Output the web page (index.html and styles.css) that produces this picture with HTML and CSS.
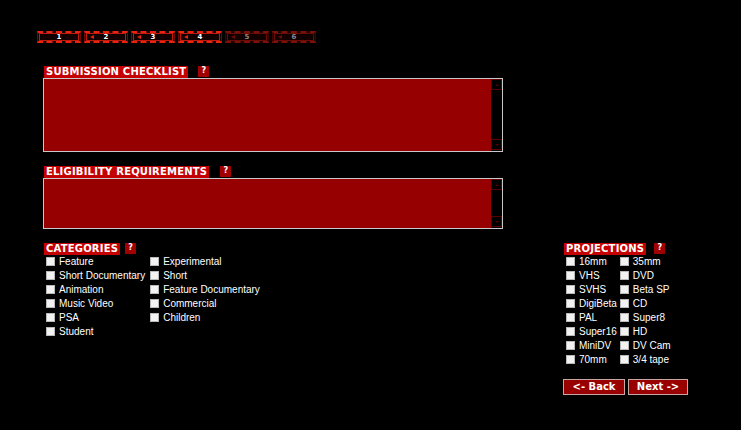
FILE: index.html
```html
<!DOCTYPE html>
<html>
<head>
<meta charset="utf-8">
<link rel="stylesheet" href="styles.css">
</head>
<body>
<div class="page">
  <div class="tabs">
    <div class="tab"><span class="tab-in">1</span></div>
    <div class="tab"><span class="tab-in"><i class="arr"></i>2</span></div>
    <div class="tab"><span class="tab-in"><i class="arr"></i>3</span></div>
    <div class="tab"><span class="tab-in"><i class="arr"></i>4</span></div>
    <div class="tab tab-off"><span class="tab-in"><i class="arr"></i>5</span></div>
    <div class="tab tab-off"><span class="tab-in"><i class="arr"></i>6</span></div>
  </div>

  <div class="main">
    <div class="section">
      <div class="head"><span class="label">SUBMISSION CHECKLIST</span><span class="help g10">?</span></div>
      <div class="ta ta-tall"><div class="ta-body"></div><div class="sb"><span class="sb-btn"><i class="up"></i></span><span class="sb-btn"><i class="down"></i></span></div></div>
    </div>

    <div class="section s2">
      <div class="head"><span class="label">ELIGIBILITY REQUIREMENTS</span><span class="help g11">?</span></div>
      <div class="ta ta-short"><div class="ta-body"></div><div class="sb"><span class="sb-btn"><i class="up"></i></span><span class="sb-btn"><i class="down"></i></span></div></div>
    </div>

    <div class="bottom">
      <div class="cats">
        <div class="head"><span class="label">CATEGORIES</span><span class="help g5">?</span></div>
        <div class="grid cat-grid">
          <label class="opt"><input type="checkbox"><span>Feature</span></label>
          <label class="opt"><input type="checkbox"><span>Experimental</span></label>
          <label class="opt"><input type="checkbox"><span>Short Documentary</span></label>
          <label class="opt"><input type="checkbox"><span>Short</span></label>
          <label class="opt"><input type="checkbox"><span>Animation</span></label>
          <label class="opt"><input type="checkbox"><span>Feature Documentary</span></label>
          <label class="opt"><input type="checkbox"><span>Music Video</span></label>
          <label class="opt"><input type="checkbox"><span>Commercial</span></label>
          <label class="opt"><input type="checkbox"><span>PSA</span></label>
          <label class="opt"><input type="checkbox"><span>Children</span></label>
          <label class="opt"><input type="checkbox"><span>Student</span></label>
        </div>
      </div>
      <div class="proj">
        <div class="head"><span class="label">PROJECTIONS</span><span class="help g8">?</span></div>
        <div class="grid proj-grid">
          <label class="opt"><input type="checkbox"><span>16mm</span></label>
          <label class="opt"><input type="checkbox"><span>35mm</span></label>
          <label class="opt"><input type="checkbox"><span>VHS</span></label>
          <label class="opt"><input type="checkbox"><span>DVD</span></label>
          <label class="opt"><input type="checkbox"><span>SVHS</span></label>
          <label class="opt"><input type="checkbox"><span>Beta SP</span></label>
          <label class="opt"><input type="checkbox"><span>DigiBeta</span></label>
          <label class="opt"><input type="checkbox"><span>CD</span></label>
          <label class="opt"><input type="checkbox"><span>PAL</span></label>
          <label class="opt"><input type="checkbox"><span>Super8</span></label>
          <label class="opt"><input type="checkbox"><span>Super16</span></label>
          <label class="opt"><input type="checkbox"><span>HD</span></label>
          <label class="opt"><input type="checkbox"><span>MiniDV</span></label>
          <label class="opt"><input type="checkbox"><span>DV Cam</span></label>
          <label class="opt"><input type="checkbox"><span>70mm</span></label>
          <label class="opt"><input type="checkbox"><span>3/4 tape</span></label>
        </div>
        <div class="buttons">
          <button class="btn btn-back">&lt;- Back</button>
          <button class="btn btn-next">Next -&gt;</button>
        </div>
      </div>
    </div>
  </div>
</div>
</body>
</html>
```

FILE: styles.css
```css
html, body {
  margin: 0;
  background: #000;
}
body {
  font-family: "Liberation Sans", Arial, sans-serif;
  color: #fff;
}
.page {
  padding: 31px 0 0 37px;
}

/* step tabs */
.tabs {
  display: flex;
  gap: 3px;
}
.tab {
  box-sizing: border-box;
  width: 44px;
  height: 12px;
  border-top: 2px dashed #e8230f;
  border-bottom: 2px dashed #e8230f;
  border-left: 1px solid #6a0a00;
  border-right: 1px solid #6a0a00;
  padding: 0 1px;
  background: #1a0200;
}
.tab-in {
  box-sizing: border-box;
  position: relative;
  display: flex;
  align-items: center;
  justify-content: center;
  height: 8px;
  border: 1px solid #c0180a;
  background: #120000;
  font: bold 7px "DejaVu Sans", Verdana, sans-serif;
  color: #fff;
  line-height: 6px;
}
.arr {
  position: absolute;
  left: 3px;
  top: 1px;
  width: 0;
  height: 0;
  border-top: 2px solid transparent;
  border-bottom: 2px solid transparent;
  border-right: 4px solid #e8230f;
}
.tab-off {
  border-top-color: #7a1208;
  border-bottom-color: #7a1208;
  border-left-color: #3a0500;
  border-right-color: #3a0500;
}
.tab-off .tab-in {
  border-color: #6a0c05;
  color: #8a8a8a;
}
.tab-off .arr {
  border-right-color: #6a0c05;
}

/* main */
.main {
  margin-top: 23px;
  padding-left: 6px;
  display: flex;
  flex-direction: column;
}
.s2 {
  margin-top: 14px;
}
.head {
  display: flex;
  align-items: flex-end;
  height: 12px;
  padding-left: 1px;
}
.label {
  display: block;
  height: 12px;
  line-height: 12px;
  padding: 0 2px 0 2px;
  background: #c40000;
  font: bold 10px "DejaVu Sans", Verdana, sans-serif;
  letter-spacing: 0.2px;
  color: #fff;
  white-space: nowrap;
}
.help {
  display: block;
  width: 11px;
  height: 11px;
  line-height: 11px;
  margin-bottom: 1px;
  text-align: center;
  background: #a00000;
  font: bold 8px "DejaVu Sans", Verdana, sans-serif;
  color: #fff;
}
.g10 { margin-left: 10px; }
.g11 { margin-left: 11px; }
.g8 { margin-left: 8px; }
.g5 { margin-left: 5px; }

/* textareas */
.ta {
  box-sizing: border-box;
  width: 460px;
  border: 1px solid #c8c8c8;
  display: flex;
}
.ta-tall { height: 74px; }
.ta-short { height: 51px; }
.ta-body {
  flex: 1;
  background: #960000;
}
.sb {
  width: 11px;
  background: #000;
  display: flex;
  flex-direction: column;
  justify-content: space-between;
  padding: 0 0 1px 0;
}
.sb-btn {
  box-sizing: border-box;
  display: flex;
  align-items: center;
  justify-content: center;
  width: 11px;
  height: 11px;
  border: 1px solid #5a0000;
}
.up, .down {
  width: 0;
  height: 0;
  border-left: 2px solid transparent;
  border-right: 2px solid transparent;
}
.up { border-bottom: 2px solid #5a0000; }
.down { border-top: 2px solid #5a0000; }

/* bottom part */
.bottom {
  display: flex;
  margin-top: 14px;
}
.cats {
  width: 520px;
}
.grid {
  display: grid;
  grid-template-columns: auto auto;
  justify-content: start;
  column-gap: 2px;
  margin-top: -1px;
}
.opt {
  display: flex;
  align-items: center;
  height: 14px;
  font-size: 10px;
  color: #fff;
  white-space: nowrap;
}
.opt input {
  appearance: none;
  -webkit-appearance: none;
  box-sizing: border-box;
  width: 9px;
  height: 9px;
  margin: 0 4px 0 3px;
  border: 1px solid #b8b8b8;
  background: #f2f2f2;
}
.proj-grid {
  column-gap: 0;
}
.buttons {
  display: flex;
  gap: 3px;
  margin-top: 13px;
}
.btn {
  box-sizing: border-box;
  height: 16px;
  padding: 0;
  border: 1px solid #c9a6a6;
  background: #990000;
  color: #fff;
  font: bold 10px "DejaVu Sans", Verdana, sans-serif;
  line-height: 14px;
}
.btn-back { width: 62px; }
.btn-next { width: 60px; }
```
